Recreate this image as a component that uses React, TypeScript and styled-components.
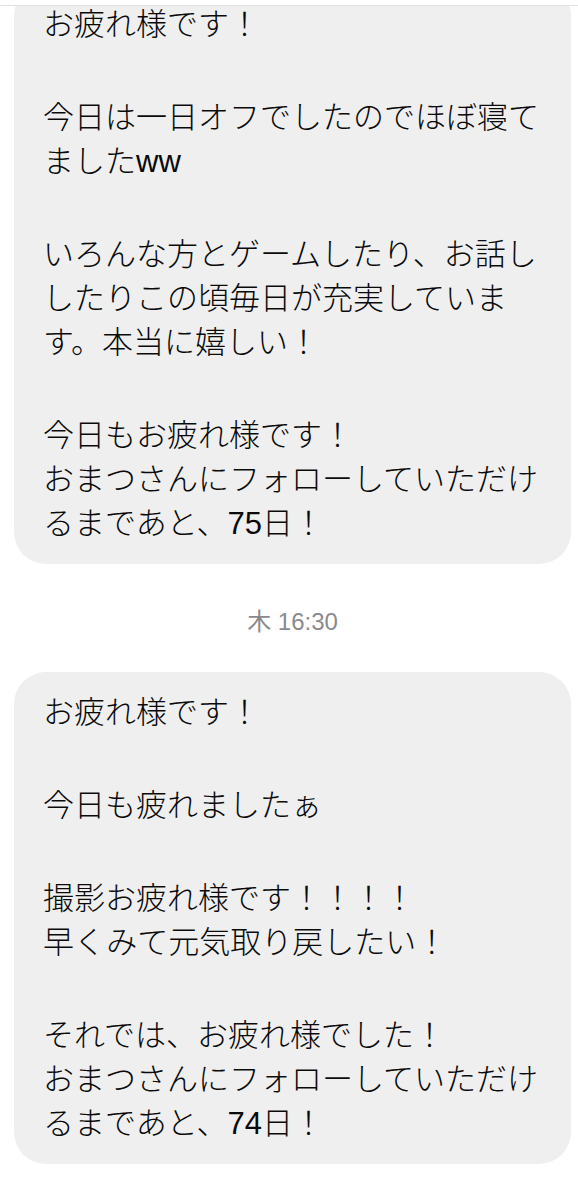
import styled, { createGlobalStyle } from 'styled-components';

const GlobalStyle = createGlobalStyle`
    html, body {
        margin: 0;
        padding: 0;
        background: #ffffff;
    }
    body {
        font-family: "Liberation Sans", "Noto Sans CJK JP", sans-serif;
        -webkit-font-smoothing: antialiased;
    }
`;

interface Message {
    paragraphs: string[][];
}

const Screen = styled.div`
    width: 578px;
    height: 1200px;
    overflow: hidden;
    display: flex;
    flex-direction: column;
    background: #ffffff;
`;

// the nav bar is scrolled off, only its bottom hairline is left
const TopEdge = styled.div`
    position: relative;
    z-index: 1;
    flex-shrink: 0;
    height: 5px;
    background: #ffffff;
    border-bottom: 1px solid #e2e2e2;
`;

const Thread = styled.div`
    display: flex;
    flex-direction: column;
    margin-top: -22px;
    padding: 0 7px 0 14px;
`;

const Bubble = styled.div`
    background: #efefef;
    border-radius: 32px;
    padding: 19px 24px 18px 29px;
    color: #0a0a0a;
    font-size: 31px;
    font-weight: 300;
    line-height: 44px;
`;

const Paragraph = styled.p`
    margin: 0;

    & + & {
        margin-top: 49px;
    }
`;

const Line = styled.span`
    display: block;
`;

const Timestamp = styled.div`
    padding: 43px 0 35px;
    text-align: center;
    font-size: 24px;
    line-height: 30px;
    color: #8a8a8e;
`;

const first: Message = {
    paragraphs: [
        ['お疲れ様です！'],
        ['今日は一日オフでしたのでほぼ寝てましたww'],
        ['いろんな方とゲームしたり、お話ししたりこの頃毎日が充実しています。本当に嬉しい！'],
        ['今日もお疲れ様です！', 'おまつさんにフォローしていただけるまであと、75日！'],
    ],
};

const second: Message = {
    paragraphs: [
        ['お疲れ様です！'],
        ['今日も疲れましたぁ'],
        ['撮影お疲れ様です！！！！', '早くみて元気取り戻したい！'],
        ['それでは、お疲れ様でした！', 'おまつさんにフォローしていただけるまであと、74日！'],
    ],
};

const MessageBubble: React.FC<{ message: Message }> = ({ message }) => {
    return (
        <Bubble>
            {message.paragraphs.map((lines, i) => (
                <Paragraph key={i}>
                    {lines.map((line, j) => (
                        <Line key={j}>{line}</Line>
                    ))}
                </Paragraph>
            ))}
        </Bubble>
    );
};

const App: React.FC = () => {
    return (
        <Screen>
            <GlobalStyle />
            <TopEdge />
            <Thread>
                <MessageBubble message={first} />
                <Timestamp>木 16:30</Timestamp>
                <MessageBubble message={second} />
            </Thread>
        </Screen>
    );
};

export default App;
